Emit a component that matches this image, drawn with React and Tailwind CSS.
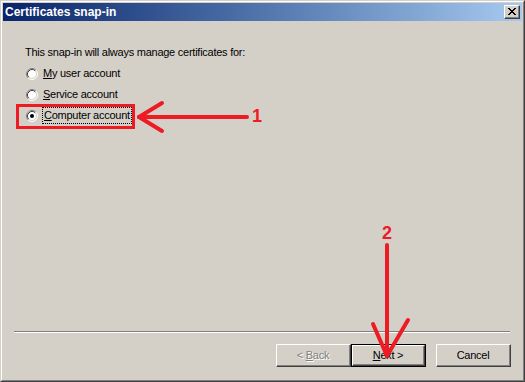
import React from "react";

function Radio({ checked }) {
  return (
    <svg width="12" height="12" viewBox="0 0 12 12" className="shrink-0">
      <circle cx="6" cy="6" r="5" fill="#fff" />
      <path d="M2.11 9.89 A5.5 5.5 0 0 1 9.89 2.11" fill="none" stroke="#808080" strokeWidth="1" />
      <path d="M9.89 2.11 A5.5 5.5 0 0 1 2.11 9.89" fill="none" stroke="#ffffff" strokeWidth="1" />
      <path d="M2.82 9.18 A4.5 4.5 0 0 1 9.18 2.82" fill="none" stroke="#404040" strokeWidth="1" />
      <path d="M9.18 2.82 A4.5 4.5 0 0 1 2.82 9.18" fill="none" stroke="#d4d0c8" strokeWidth="1" />
      {checked && <circle cx="6" cy="6" r="2" fill="#000" />}
    </svg>
  );
}

function CloseGlyph() {
  const rows = [
    "XX....XX",
    ".XX..XX.",
    "..XXXX..",
    "...XX...",
    "..XXXX..",
    ".XX..XX.",
    "XX....XX",
  ];
  const rects = [];
  rows.forEach((r, y) =>
    r.split("").forEach((c, x) => {
      if (c === "X") rects.push(<rect key={x + "-" + y} x={x} y={y} width="1" height="1" fill="#000" />);
    })
  );
  return (
    <svg width="8" height="7" viewBox="0 0 8 7" shapeRendering="crispEdges">
      {rects}
    </svg>
  );
}

function Btn({ children, isDefault, disabled }) {
  const inner = (
    <div className="h-full w-full border-t border-l border-t-white border-l-white border-b border-r border-b-[#404040] border-r-[#404040]">
      <div className="h-full w-full border-b border-r border-b-[#808080] border-r-[#808080] flex items-center justify-center">
        <span
          className={
            disabled
              ? "text-[#808080] [text-shadow:1px_1px_0_#ffffff]"
              : "text-black"
          }
        >
          {children}
        </span>
      </div>
    </div>
  );
  if (isDefault) {
    return <div className="w-[75px] h-[23px] border border-black">{inner}</div>;
  }
  return <div className="w-[75px] h-[23px]">{inner}</div>;
}

export default function App() {
  return (
    <div
      className="relative w-[525px] h-[382px] bg-[#d4d0c8] text-[11px] leading-[13px] tracking-[-0.25px] text-black"
      style={{ fontFamily: '"Liberation Sans", Arial, sans-serif' }}
    >
      <div className="w-full h-full border border-t-[#d4d0c8] border-l-[#d4d0c8] border-b-[#404040] border-r-[#404040]">
        <div className="w-full h-full border border-t-white border-l-white border-b-[#808080] border-r-[#808080]">
          <div className="w-full h-full p-px flex flex-col">
            {/* Title bar */}
            <div className="h-[18px] shrink-0 flex items-center justify-between bg-gradient-to-r from-[#0a246a] to-[#a6caf0] pl-[2px] pr-[2px]">
              <span className="text-white font-bold text-[12px] leading-[14px] tracking-[0px]">Certificates snap-in</span>
              <div className="w-[16px] h-[14px] bg-[#d4d0c8] border-t border-l border-t-white border-l-white border-b border-r border-b-[#404040] border-r-[#404040]">
                <div className="w-full h-full border-b border-r border-b-[#808080] border-r-[#808080] flex items-center justify-center pl-px">
                  <CloseGlyph />
                </div>
              </div>
            </div>

            {/* Body */}
            <div className="flex-1 flex flex-col">
              <div className="flex-1 pl-[22px] pt-[25px]">
                <div>This snap-in will always manage certificates for:</div>
                <div className="mt-[4px] flex flex-col pl-px">
                  <div className="h-[21px] flex items-center gap-[4px]">
                    <Radio />
                    <span className="px-px"><span className="underline">M</span>y user account</span>
                  </div>
                  <div className="h-[21px] flex items-center gap-[4px]">
                    <Radio />
                    <span className="px-px"><span className="underline">S</span>ervice account</span>
                  </div>
                  <div className="h-[21px] flex items-center gap-[4px]">
                    <Radio checked />
                    <span className="px-px py-[1px] border border-dotted border-black">
                      <span className="underline">C</span>omputer account
                    </span>
                  </div>
                </div>
              </div>

              <div className="ml-[11px] mr-[12px] h-[2px] border-t border-t-[#808080] border-b border-b-white" />

              <div className="flex justify-end pt-[11px] pb-[12px] pr-[11px]">
                <Btn disabled>
                  &lt; <span className="underline">B</span>ack
                </Btn>
                <Btn isDefault>
                  <span className="underline">N</span>ext &gt;
                </Btn>
                <div className="w-[10px]" />
                <Btn>Cancel</Btn>
              </div>
            </div>
          </div>
        </div>
      </div>

      {/* Annotations */}
      <svg
        className="absolute left-0 top-0 pointer-events-none"
        width="525"
        height="382"
        viewBox="0 0 525 382"
      >
        <rect x="17.5" y="105.5" width="116" height="22" fill="none" stroke="#ed1c24" strokeWidth="3" />
        <g stroke="#ed1c24" strokeWidth="4" strokeLinecap="round" fill="none">
          <line x1="139" y1="117" x2="247" y2="117" />
          <line x1="139" y1="117" x2="162" y2="103" />
          <line x1="139" y1="117" x2="162" y2="131" />
          <line x1="387" y1="245" x2="387" y2="356" />
          <line x1="387" y1="356" x2="373" y2="324" />
          <line x1="387" y1="356" x2="408" y2="320" />
        </g>
      </svg>
      <div className="absolute left-[252px] top-[106px] text-[18px] leading-[20px] font-bold tracking-[0px] text-[#ed1c24]">1</div>
      <div className="absolute left-[382px] top-[223px] text-[18px] leading-[20px] font-bold tracking-[0px] text-[#ed1c24]">2</div>
    </div>
  );
}
